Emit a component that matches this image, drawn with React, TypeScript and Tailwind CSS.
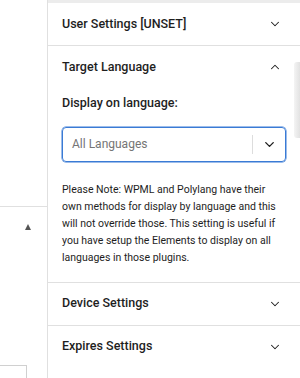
import { ChevronDown, ChevronUp } from 'lucide-react';

const font = { fontFamily: 'Roboto, "Liberation Sans", sans-serif' };

const SectionHeader = ({ title, open }: { title: string; open?: boolean }) => (
  <div className="flex h-[42px] items-center justify-between pl-[14px] pr-[18px]">
    <span className="text-[12.5px] font-medium text-[#1e1e1e]">{title}</span>
    {open ? (
      <ChevronUp size={14} strokeWidth={1.8} className="text-[#1e1e1e]" />
    ) : (
      <ChevronDown size={14} strokeWidth={1.8} className="text-[#1e1e1e]" />
    )}
  </div>
);

const App = () => {
  return (
    <div className="relative flex h-[378px] w-[300px] overflow-hidden bg-white" style={font}>
      {/* left column */}
      <div className="flex w-[48px] shrink-0 flex-col border-r border-[#e0e0e0]">
        <div className="h-[207px] border-b border-[#e0e0e0]" />
        <div className="flex h-[23px] items-end justify-end pr-[16px]">
          <div className="h-0 w-0 border-x-[3.5px] border-b-[6px] border-x-transparent border-b-[#555]" />
        </div>
        <div className="flex-1" />
        <div className="h-[13px] w-[27px] border-t border-r border-[#d0d0d0]" />
      </div>

      {/* right panel */}
      <div className="flex flex-1 flex-col">
        <div className="h-[3px] bg-[#ececec]" />
        <div className="border-b border-[#e0e0e0]">
          <SectionHeader title="User Settings [UNSET]" />
        </div>

        <div className="border-b border-[#e0e0e0] pb-[16px]">
          <SectionHeader title="Target Language" open />
          <div className="pl-[14px] pr-[14px]">
            <div className="mt-[6px] text-[12.5px] font-medium text-[#1e1e1e]">Display on language:</div>
            <div className="mt-[14px] flex h-[35px] w-[224px] items-center rounded-[4px] border border-[#3a7bd5] shadow-[0_0_0_0.5px_#3a7bd5]">
              <span className="flex-1 pl-[9px] text-[12px] text-[#757575]">All Languages</span>
              <div className="h-[19px] w-px bg-[#dddddd]" />
              <div className="flex w-[32px] items-center justify-center">
                <ChevronDown size={15} strokeWidth={2.2} className="text-[#1e1e1e]" />
              </div>
            </div>
            <p className="mt-[19px] text-[10.5px] leading-[17px] text-[#1e1e1e]">
              Please Note: WPML and Polylang have their
              <br />
              own methods for display by language and this
              <br />
              will not override those. This setting is useful if
              <br />
              you have setup the Elements to display on all
              <br />
              languages in those plugins.
            </p>
          </div>
        </div>

        <div className="border-b border-[#e0e0e0]">
          <SectionHeader title="Device Settings" />
        </div>
        <SectionHeader title="Expires Settings" />
      </div>

      {/* shadow of an overlapping panel */}
      <div className="absolute right-0 top-[62px] h-[76px] w-[6px] rounded-l-[3px] bg-gradient-to-r from-[#f4f4f4] to-[#e2e2e2]" />
    </div>
  );
};

export default App;
